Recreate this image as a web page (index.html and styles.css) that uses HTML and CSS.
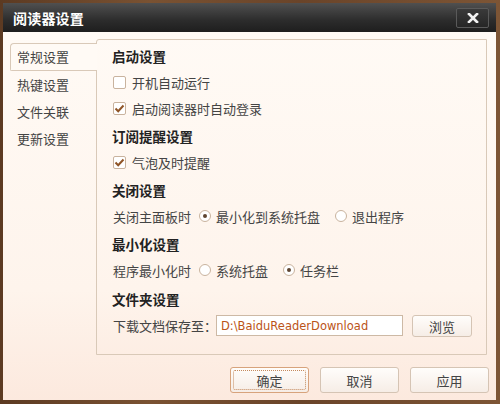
FILE: index.html
```html
<!DOCTYPE html>
<html lang="zh-CN">

<head>
    <meta charset="UTF-8">
    <title>阅读器设置</title>
    <link rel="stylesheet" href="styles.css">
</head>

<body>
    <div class="window">
        <header class="titlebar">
            <h1 class="title">阅读器设置</h1>
            <button class="close_btn" type="button">
                <svg width="12" height="10" viewBox="0 0 12 10">
                    <path d="M2 1 L10 9 M10 1 L2 9" stroke="#f2f2f2" stroke-width="2.6" stroke-linecap="square" fill="none"/>
                </svg>
            </button>
        </header>

        <div class="content">
            <div class="main">
                <ul class="nav">
                    <li class="nav_item active">常规设置</li>
                    <li class="nav_item">热键设置</li>
                    <li class="nav_item">文件关联</li>
                    <li class="nav_item">更新设置</li>
                </ul>

                <div class="panel">
                    <h3 class="heading first">启动设置</h3>
                    <div class="row check_row">
                        <span class="checkbox"></span>开机自动运行
                    </div>
                    <div class="row check_row">
                        <span class="checkbox checked">
                            <svg width="11" height="9" viewBox="0 0 11 9"><path d="M1.5 4.5 L4.2 7.2 L9.5 1.5" stroke="#8f5426" stroke-width="2" fill="none"/></svg>
                        </span>启动阅读器时自动登录
                    </div>

                    <h3 class="heading">订阅提醒设置</h3>
                    <div class="row check_row">
                        <span class="checkbox checked">
                            <svg width="11" height="9" viewBox="0 0 11 9"><path d="M1.5 4.5 L4.2 7.2 L9.5 1.5" stroke="#8f5426" stroke-width="2" fill="none"/></svg>
                        </span>气泡及时提醒
                    </div>

                    <h3 class="heading">关闭设置</h3>
                    <div class="row">
                        <span class="row_lb">关闭主面板时</span>
                        <span class="radio checked"></span><span class="opt">最小化到系统托盘</span>
                        <span class="radio"></span><span class="opt">退出程序</span>
                    </div>

                    <h3 class="heading">最小化设置</h3>
                    <div class="row">
                        <span class="row_lb">程序最小化时</span>
                        <span class="radio"></span><span class="opt">系统托盘</span>
                        <span class="radio checked"></span><span class="opt">任务栏</span>
                    </div>

                    <h3 class="heading folder">文件夹设置</h3>
                    <div class="row file_row">
                        <span>下载文档保存至：</span>
                        <input type="text" class="path_inp" value="D:\BaiduReaderDownload">
                        <button class="btn small_btn" type="button">浏览</button>
                    </div>
                </div>
            </div>

            <div class="footer">
                <button class="btn foot_btn default_btn" type="button"><span>确定</span></button>
                <button class="btn foot_btn" type="button">取消</button>
                <button class="btn foot_btn" type="button">应用</button>
            </div>
        </div>
    </div>
</body>

</html>
```

FILE: styles.css
```css
* {
    margin: 0;
    padding: 0;
    box-sizing: border-box;
}

body {
    width: 500px;
    height: 404px;
    overflow: hidden;
    background: linear-gradient(90deg, #5c3a22, #7a5232 30%, #6a4429 60%, #7d5535);
    font-family: "Noto Sans CJK SC", "Noto Sans", sans-serif;
    font-size: 13px;
    color: #444;
}

.window {
    margin: 3px 4px 0 3px;
    height: 397px;
    display: flex;
    flex-direction: column;
}

.titlebar {
    height: 29px;
    display: flex;
    justify-content: space-between;
    align-items: center;
    padding: 0 7px 0 10px;
    background: linear-gradient(#505050, #2c2c2c 60%, #1e1e1e);
}

.title {
    color: #fff;
    font-size: 14px;
    font-weight: bold;
    letter-spacing: 0.2px;
}

.close_btn {
    width: 33px;
    height: 20px;
    margin-top: 1px;
    display: flex;
    justify-content: center;
    align-items: center;
    background: linear-gradient(#3a3a3a, #262626);
    border: 1px solid #5a5a5a;
    border-radius: 2px;
}

.content {
    flex: 1;
    background: linear-gradient(#fffaf5, #fef4ec 70%, #fce9de);
    padding-top: 7px;
}

.main {
    display: flex;
}

.nav {
    width: 93px;
    list-style: none;
    padding-top: 4px;
}

.nav_item {
    height: 27px;
    line-height: 27px;
    padding-left: 14px;
}

.nav_item.active {
    position: relative;
    z-index: 1;
    height: 28px;
    line-height: 26px;
    margin-left: 7px;
    margin-right: -1px;
    padding-left: 6px;
    background: #fffaf5;
    border: 1px solid #d9c9b8;
    border-right: none;
    border-top-left-radius: 4px;
    border-bottom-left-radius: 2px;
}

.panel {
    width: 391px;
    height: 316px;
    border: 1px solid #d9c9b8;
    border-top-left-radius: 3px;
    padding: 3px 0 0 15px;
}

.heading {
    height: 26px;
    line-height: 26px;
    margin-top: 2px;
    font-size: 13.5px;
    font-weight: bold;
    color: #222;
}

.heading.first {
    margin-top: 0;
}

.heading.folder {
    margin-top: 3px;
}

.row {
    height: 26px;
    display: flex;
    align-items: center;
    padding-left: 1px;
}

.checkbox {
    width: 13px;
    height: 13px;
    margin-right: 6px;
    display: flex;
    justify-content: center;
    align-items: center;
    background: #fff;
    border: 1px solid #c9b39e;
    border-radius: 2px;
}

.row_lb {
    margin-right: 8px;
}

.radio {
    width: 12px;
    height: 12px;
    margin-right: 5px;
    display: flex;
    justify-content: center;
    align-items: center;
    background: #fff;
    border: 1px solid #c9b39e;
    border-radius: 50%;
}

.radio.checked::after {
    content: "";
    width: 4px;
    height: 4px;
    border-radius: 50%;
    background: #5e4430;
}

.opt {
    margin-right: 15px;
}

.file_row {
    height: 27px;
}

.path_inp {
    width: 187px;
    height: 21px;
    margin-left: -1px;
    padding-left: 4px;
    font-family: "DejaVu Sans", sans-serif;
    font-size: 11.5px;
    color: #bb5418;
    background: #fff;
    border: 1px solid #cdb9a5;
    outline: none;
}

.btn {
    font-family: "Noto Sans CJK SC", "Noto Sans", sans-serif;
    font-size: 13px;
    color: #444;
    background: linear-gradient(#fffdfb, #f6ede6);
    border: 1px solid #d5c4b4;
    border-radius: 3px;
}

.small_btn {
    width: 60px;
    height: 22px;
    margin-left: 9px;
    margin-top: 1px;
}

.footer {
    display: flex;
    justify-content: flex-end;
    gap: 11px;
    padding: 12px 7px 0 0;
}

.foot_btn {
    width: 79px;
    height: 26px;
}

.default_btn {
    padding: 2px;
    border-color: #d7a37c;
}

.default_btn span {
    display: flex;
    justify-content: center;
    align-items: center;
    height: 100%;
    border: 1px dotted #c48a5e;
    border-radius: 2px;
}
```
